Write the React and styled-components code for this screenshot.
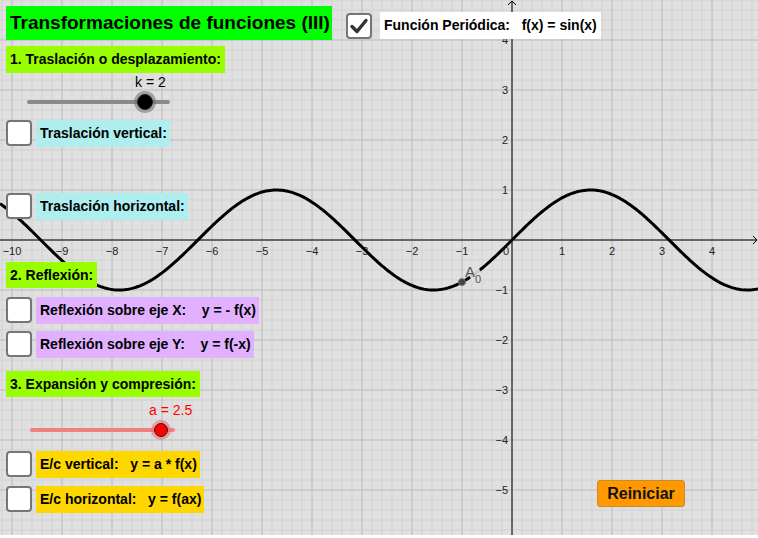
import React from 'react'
import styled, { createGlobalStyle } from 'styled-components'

const Global = createGlobalStyle`
  html, body {
    margin: 0;
    padding: 0;
    background: #fff;
    overflow: hidden;
  }
`

const W = 758
const H = 535
const OX = 512
const OY = 240
const U = 50

const Stage = styled.div`
  display: grid;
  width: 758px;
  height: 538px;
  background: #fff;
  position: relative;
  overflow: hidden;
  font-family: "Liberation Sans", Arial, sans-serif;
  color: #000;
`

const Canvas = styled.svg`
  grid-area: 1 / 1;
  display: block;
`

const Panel = styled.div`
  grid-area: 1 / 1;
  display: flex;
  flex-direction: column;
  align-items: flex-start;
  padding: 6px 0 0 6px;
  z-index: 1;
`

const TopRow = styled.div`
  display: flex;
  align-items: flex-start;
`

const Title = styled.div`
  box-sizing: border-box;
  width: 326px;
  background: #00ff00;
  height: 34px;
  line-height: 34px;
  padding: 0 4px;
  font-size: 19px;
  font-weight: bold;
  white-space: pre;
`

const WhiteLabel = styled.div`
  margin: 6px 0 0 8px;
  background: #fff;
  height: 27px;
  line-height: 27px;
  padding: 0 4px;
  font-size: 14px;
  font-weight: bold;
  white-space: pre;
`

const Heading = styled.div`
  margin-top: ${p => p.$mt}px;
  background: #99ff00;
  height: ${p => p.$h || 26}px;
  line-height: ${p => p.$h || 26}px;
  padding: 0 4px;
  font-size: 14px;
  font-weight: bold;
  white-space: pre;
`

const Row = styled.div`
  display: flex;
  align-items: flex-start;
  gap: 4px;
  margin-top: ${p => p.$mt}px;
`

const Box = styled.div`
  box-sizing: border-box;
  width: 26px;
  height: 26px;
  margin-top: ${p => p.$mt || 0}px;
  margin-left: ${p => p.$ml || 0}px;
  background: #fff;
  border: 2px solid #767676;
  border-radius: 4px;
  display: flex;
  align-items: center;
  justify-content: center;
`

const Tag = styled.div`
  background: ${p => p.$bg};
  height: 27px;
  line-height: 27px;
  padding: 0 3px 0 4px;
  font-size: 14px;
  font-weight: bold;
  white-space: pre;
`

const SliderBlock = styled.div`
  margin-top: ${p => p.$mt}px;
  width: 200px;
`

const SliderLabel = styled.div`
  height: 16px;
  line-height: 16px;
  font-size: 14px;
  color: ${p => p.$color};
  padding-left: ${p => p.$pl}px;
  white-space: pre;
`

const TrackArea = styled.div`
  position: relative;
  height: 24px;
  margin-left: ${p => p.$x}px;
  width: ${p => p.$w}px;
`

const Track = styled.div`
  position: absolute;
  left: 0;
  right: 0;
  top: 10px;
  height: 4px;
  border-radius: 2px;
  background: ${p => p.$color};
`

const Knob = styled.div`
  position: absolute;
  top: 12px;
  width: ${p => p.$r * 2}px;
  height: ${p => p.$r * 2}px;
  margin: -${p => p.$r}px 0 0 -${p => p.$r}px;
  border-radius: 50%;
  box-sizing: border-box;
  background: ${p => p.$fill};
  border: 1.5px solid #222;
  box-shadow: 0 0 0 3px ${p => p.$halo};
`

const Reset = styled.button`
  position: absolute;
  left: 597px;
  top: 480px;
  width: 88px;
  height: 27px;
  box-sizing: border-box;
  background: #ff9900;
  border: 1px solid #cc8a2e;
  border-radius: 3px;
  font-family: "Liberation Sans", Arial, sans-serif;
  font-size: 16px;
  font-weight: bold;
  color: #111;
  padding: 0;
  z-index: 2;
`

const CheckMark = () => (
  <svg width="20" height="20" viewBox="0 0 20 20">
    <polyline points="3,10.5 8,15.5 17,4.5" fill="none" stroke="#333" strokeWidth="3.4" strokeLinecap="round" strokeLinejoin="round" />
  </svg>
)

const minus = n => (n < 0 ? '\u2212' + Math.abs(n) : String(n))

const Graph = () => {
  const minorX = []
  for (let x = OX % 10; x <= W; x += 10) minorX.push(x)
  const minorY = []
  for (let y = OY % 10; y <= H; y += 10) minorY.push(y)
  const majorX = minorX.filter(x => (x - OX) % U === 0)
  const majorY = minorY.filter(y => (y - OY) % U === 0)

  let d = ''
  for (let px = 0; px <= W; px += 2) {
    const y = OY - U * Math.sin((px - OX) / U)
    d += (px === 0 ? 'M' : 'L') + px + ' ' + y.toFixed(2) + ' '
  }

  const xs = []
  for (let k = -10; k <= 4; k++) if (k !== 0) xs.push(k)
  const ys = []
  for (let k = -5; k <= 4; k++) if (k !== 0) ys.push(k)

  const ax = OX - U
  const ay = OY + U * Math.sin(1)

  return (
    <Canvas width={W} height={H} viewBox={`0 0 ${W} ${H}`}>
      <rect width={W} height={H} fill="#e0e0e0" />
      {minorX.map(x => <line key={'mx' + x} x1={x} y1={0} x2={x} y2={H} stroke="#d2d2d2" strokeWidth="1" />)}
      {minorY.map(y => <line key={'my' + y} x1={0} y1={y} x2={W} y2={y} stroke="#d2d2d2" strokeWidth="1" />)}
      {majorX.map(x => <line key={'Mx' + x} x1={x} y1={0} x2={x} y2={H} stroke="#c0c0c0" strokeWidth="1" />)}
      {majorY.map(y => <line key={'My' + y} x1={0} y1={y} x2={W} y2={y} stroke="#c0c0c0" strokeWidth="1" />)}
      <line x1={0} y1={OY} x2={W - 1} y2={OY} stroke="#000" strokeWidth="1" />
      <line x1={OX} y1={1} x2={OX} y2={H} stroke="#000" strokeWidth="1" />
      <polyline points={`${W - 5},${OY - 4} ${W - 1},${OY} ${W - 5},${OY + 4}`} fill="none" stroke="#000" strokeWidth="1" />
      <polyline points={`${OX - 4},5 ${OX},1 ${OX + 4},5`} fill="none" stroke="#000" strokeWidth="1" />
      <g fontFamily='"Liberation Sans", Arial, sans-serif' fontSize="11" fill="#222">
        {xs.map(k => (
          <text key={'tx' + k} x={OX + U * k} y={OY + 15} textAnchor="middle">{minus(k)}</text>
        ))}
        <text x={OX - 9} y={OY + 15}>0</text>
        {ys.map(k => (
          <text key={'ty' + k} x={OX - 4} y={OY - U * k + 4} textAnchor="end">{minus(k)}</text>
        ))}
      </g>
      <path d={d} fill="none" stroke="#000" strokeWidth="3" strokeLinejoin="round" />
      <rect x={468} y={262} width={12} height={20} fill="#e0e0e0" transform={`rotate(-30 474 272)`} opacity="0.9" />
      <circle cx={ax} cy={ay} r="3.5" fill="#444" stroke="#777" strokeWidth="1" />
      <text x={465} y={277} fontFamily='"Liberation Sans", Arial, sans-serif' fontSize="15" fill="#555">A</text>
      <text x={475} y={283} fontFamily='"Liberation Sans", Arial, sans-serif' fontSize="11" fill="#555">0</text>
    </Canvas>
  )
}

const CheckRow = ({ mt, bg, children }) => (
  <Row $mt={mt}>
    <Box $mt={0} />
    <Tag $bg={bg}>{children}</Tag>
  </Row>
)

export default function App() {
  return (
    <>
      <Global />
      <Stage>
        <Graph />
        <Panel>
          <TopRow>
            <Title>Transformaciones de funciones (III)</Title>
            <Box $mt={7} $ml={14}>
              <CheckMark />
            </Box>
            <WhiteLabel>{'Función Periódica:   f(x) = sin(x)'}</WhiteLabel>
          </TopRow>

          <Heading $mt={6} $h={27}>1. Traslación o desplazamiento:</Heading>
          <SliderBlock $mt={1}>
            <SliderLabel $color="#000" $pl={129}>k = 2</SliderLabel>
            <TrackArea $x={21} $w={143}>
              <Track $color="#8a8a8a" />
              <Knob $r={8} $fill="#000" $halo="rgba(110,110,110,0.55)" style={{ left: '82.5%' }} />
            </TrackArea>
          </SliderBlock>

          <CheckRow mt={6} bg="#afeeee">Traslación vertical:</CheckRow>
          <CheckRow mt={46} bg="#afeeee">Traslación horizontal:</CheckRow>

          <Heading $mt={42}>2. Reflexión:</Heading>
          <CheckRow mt={9} bg="#e1b1ff">{'Reflexión sobre eje X:    y = - f(x)'}</CheckRow>
          <CheckRow mt={7} bg="#e1b1ff">{'Reflexión sobre eje Y:    y = f(-x)'}</CheckRow>

          <Heading $mt={13}>3. Expansión y compresión:</Heading>
          <SliderBlock $mt={5}>
            <SliderLabel $color="#ff0000" $pl={143}>a = 2.5</SliderLabel>
            <TrackArea $x={24} $w={145}>
              <Track $color="#f08080" />
              <Knob $r={7} $fill="#ff0000" $halo="rgba(240,110,110,0.6)" style={{ left: '90.3%' }} />
            </TrackArea>
          </SliderBlock>

          <CheckRow mt={9} bg="#ffd700">{'E/c vertical:   y = a * f(x)'}</CheckRow>
          <CheckRow mt={8} bg="#ffd700">{'E/c horizontal:   y = f(ax)'}</CheckRow>
        </Panel>
        <Reset>Reiniciar</Reset>
      </Stage>
    </>
  )
}
